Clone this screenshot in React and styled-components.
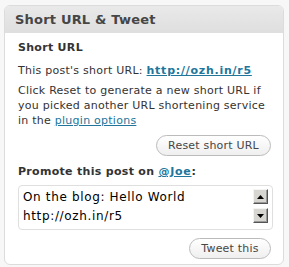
import styled, { createGlobalStyle } from "styled-components";

const GlobalStyle = createGlobalStyle`
  html, body {
    margin: 0;
    padding: 0;
    background: #f7f7f7;
  }
  body {
    font-family: "DejaVu Sans", Verdana, sans-serif;
  }
`;

const Page = styled.div`
  padding: 5px 5px 5px 4px;
`;

const Box = styled.div`
  width: 278px;
  border: 1px solid #dcdcdc;
  border-radius: 6px;
  background: #fff;
  overflow: hidden;
`;

const Header = styled.h3`
  margin: 0;
  height: 26px;
  display: flex;
  align-items: center;
  padding-left: 10px;
  background: linear-gradient(to bottom, #e9e9e9, #dfdfdf);
  border-bottom: 1px solid #dfdfdf;
  color: #464646;
  font-size: 13px;
  font-weight: bold;
  letter-spacing: 0.2px;
`;

const Content = styled.div`
  padding: 7px 10px 5px 13px;
  color: #333;
  font-size: 11px;
  line-height: 15px;
  letter-spacing: 0.25px;
`;

const Title = styled.div`
  font-weight: bold;
  letter-spacing: 0.3px;
  margin: ${(p) => p.$top || 0}px 0 ${(p) => p.$gap || 0}px;
`;

const Para = styled.p`
  margin: 0 0 ${(p) => p.$gap || 0}px;
`;

const Link = styled.a`
  color: #21759b;
  text-decoration: underline;
  font-weight: ${(p) => (p.$bold ? "bold" : "normal")};
  letter-spacing: ${(p) => (p.$bold ? 0.75 : 0.25)}px;
`;

const ButtonRow = styled.div`
  display: flex;
  justify-content: flex-end;
  padding-right: 2px;
  margin-top: ${(p) => p.$top}px;
`;

const PillButton = styled.button`
  width: ${(p) => p.$w}px;
  height: 21px;
  padding: 0;
  display: flex;
  align-items: center;
  justify-content: center;
  border: 1px solid #bbb;
  border-radius: 11px;
  background: linear-gradient(to bottom, #fff, #efefef);
  color: #464646;
  font-family: "DejaVu Sans", Verdana, sans-serif;
  font-size: 11px;
  letter-spacing: 0.2px;
`;

const TweetArea = styled.div`
  display: flex;
  margin-top: 6px;
  height: 41px;
  border: 1px solid #dfdfdf;
  border-radius: 4px;
  background: #fff;
  padding: 2px 4px 0 4px;
`;

const TweetText = styled.div`
  flex: 1;
  font-size: 12px;
  line-height: 19px;
  letter-spacing: 0.65px;
  color: #000;
`;

const ScrollCol = styled.div`
  display: flex;
  flex-direction: column;
  gap: 4px;
  margin-top: 1px;
`;

const ArrowBtn = styled.div`
  width: 13px;
  height: 13px;
  display: flex;
  align-items: center;
  justify-content: center;
  background: #d8d6d0;
  border-top: 1px solid #f4f4f4;
  border-left: 1px solid #f4f4f4;
  border-right: 1px solid #555;
  border-bottom: 1px solid #555;
  box-shadow: inset -1px -1px 0 #999;
`;

const Arrow = ({ down }) => (
  <svg width="7" height="4" viewBox="0 0 7 4">
    <path d={down ? "M0 0h7L3.5 4z" : "M0 4h7L3.5 0z"} fill="#000" />
  </svg>
);

export default function App() {
  return (
    <Page>
      <GlobalStyle />
      <Box>
        <Header>Short URL &amp; Tweet</Header>
        <Content>
          <Title $gap={8}>Short URL</Title>
          <Para $gap={5}>
            This post's short URL: <Link $bold href="#">http://ozh.in/r5</Link>
          </Para>
          <Para>
            Click Reset to generate a new short URL if you picked another URL
            shortening service in the <Link href="#">plugin options</Link>
          </Para>
          <ButtonRow $top={7}>
            <PillButton $w={115}>Reset short URL</PillButton>
          </ButtonRow>
          <Title $top={8}>
            Promote this post on <Link $bold href="#">@Joe</Link>:
          </Title>
          <TweetArea>
            <TweetText>
              On the blog: Hello World
              <br />
              http://ozh.in/r5
            </TweetText>
            <ScrollCol>
              <ArrowBtn>
                <Arrow />
              </ArrowBtn>
              <ArrowBtn>
                <Arrow down />
              </ArrowBtn>
            </ScrollCol>
          </TweetArea>
          <ButtonRow $top={8}>
            <PillButton $w={82}>Tweet this</PillButton>
          </ButtonRow>
        </Content>
      </Box>
    </Page>
  );
}
